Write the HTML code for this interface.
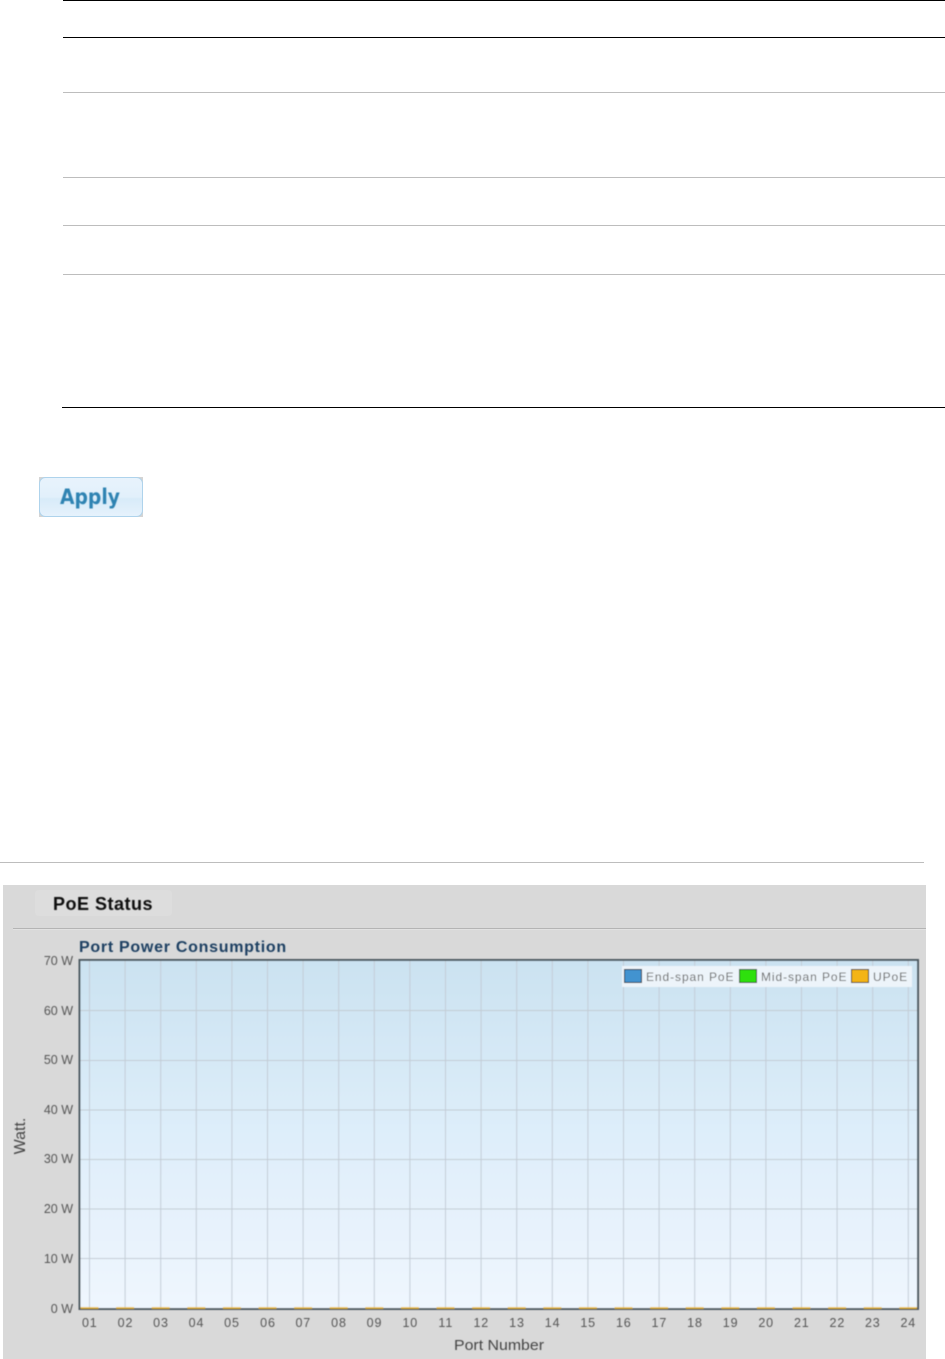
<!DOCTYPE html>
<html>
<head>
<meta charset="utf-8">
<title>PoE Status</title>
<style>
html,body{margin:0;padding:0;background:#fff;width:945px;height:1359px;overflow:hidden}
svg{display:block}
text{font-family:"Liberation Sans",Arial,sans-serif}
</style>
</head>
<body>
<svg width="945" height="1359" viewBox="0 0 945 1359" xmlns="http://www.w3.org/2000/svg">
<defs>
<linearGradient id="plot" x1="0" y1="0" x2="0" y2="1">
<stop offset="0" stop-color="#cbe2f1"/>
<stop offset="0.5" stop-color="#deeefa"/>
<stop offset="1" stop-color="#eff6fe"/>
</linearGradient>
<linearGradient id="btn" x1="0" y1="0" x2="0" y2="1">
<stop offset="0" stop-color="#e8f3fc"/>
<stop offset="0.5" stop-color="#e2f0fb"/>
<stop offset="0.55" stop-color="#d8ebf9"/>
<stop offset="1" stop-color="#e6f2fc"/>
</linearGradient>
<filter id="soft" x="-5%" y="-5%" width="110%" height="110%"><feGaussianBlur stdDeviation="0.4"/></filter>
</defs>

<rect width="945" height="1359" fill="#fff"/>

<!-- table rules -->
<rect x="63" y="0" width="882" height="1" fill="#000"/>
<rect x="63" y="37" width="882" height="1" fill="#000"/>
<rect x="63" y="92" width="882" height="1" fill="#bdbdbd"/>
<rect x="63" y="177" width="882" height="1" fill="#bdbdbd"/>
<rect x="63" y="225" width="882" height="1" fill="#bdbdbd"/>
<rect x="63" y="274" width="882" height="1" fill="#bdbdbd"/>
<rect x="62" y="407" width="883" height="1" fill="#000"/>

<!-- Apply button -->
<rect x="39" y="477" width="104" height="40" fill="#d4d4d4"/>
<rect x="39.5" y="477.5" width="103" height="39" rx="6" fill="url(#btn)" stroke="#aed3ec"/>
<g filter="url(#soft)">
<text x="90" y="504" text-anchor="middle" font-size="21" font-weight="bold" fill="#2f83b2" style="font-family:'DejaVu Sans',sans-serif" textLength="60" lengthAdjust="spacingAndGlyphs">Apply</text>
</g>

<!-- separator -->
<rect x="0" y="862" width="924" height="1" fill="#bdbdbd"/>

<!-- panel -->
<rect x="3" y="885" width="923" height="474" fill="#d9d9d9"/>
<rect x="35" y="890" width="137" height="26" rx="4" fill="#dddddd"/>
<rect x="13" y="928" width="913" height="1" fill="#b4b4b4"/>
<rect x="13" y="929" width="913" height="1" fill="#e2e2e2"/>

<g filter="url(#soft)">
<text x="53" y="910" font-size="18" font-weight="bold" fill="#0c0c0c" letter-spacing="0.5">PoE Status</text>
<text x="79" y="952" font-size="16" font-weight="bold" fill="#1f3f62" letter-spacing="0.72">Port Power Consumption</text>

<!-- plot -->
<rect x="79" y="960" width="839" height="349" fill="url(#plot)"/>
<path d="M80 1010.5H917M80 1060.5H917M80 1110H917M80 1159.5H917M80 1209H917M80 1258.5H917" stroke="#c3ccd3" stroke-width="1" fill="none"/>
<path d="M89.5 961V1308M125.1 961V1308M160.7 961V1308M196.3 961V1308M231.9 961V1308M267.5 961V1308M303.1 961V1308M338.7 961V1308M374.3 961V1308M409.9 961V1308M445.5 961V1308M481.1 961V1308M516.7 961V1308M552.3 961V1308M587.9 961V1308M623.5 961V1308M659.1 961V1308M694.7 961V1308M730.3 961V1308M765.9 961V1308M801.5 961V1308M837.1 961V1308M872.7 961V1308M908.3 961V1308" stroke="#c3ccd6" stroke-width="1" fill="none"/>
<rect x="79.5" y="960" width="838.5" height="349" fill="none" stroke="#4d5a62" stroke-width="2"/>
<line x1="80.5" y1="1308" x2="917" y2="1308" stroke="#e8b31e" stroke-width="1.6" stroke-dasharray="18 17.6"/>

<!-- legend -->
<rect x="622" y="966" width="290" height="21" fill="#edf4fa"/>
<rect x="624.5" y="969.5" width="17" height="13" fill="#4393d0" stroke="#222"/>
<rect x="739.5" y="969.5" width="17" height="13" fill="#2ee00c" stroke="#222"/>
<rect x="851.5" y="969.5" width="17" height="13" fill="#f4b414" stroke="#222"/>
<g font-size="12" fill="#666" letter-spacing="0.92">
<text x="646" y="981">End-span PoE</text>
<text x="761" y="981">Mid-span PoE</text>
<text x="873" y="981">UPoE</text>
</g>

<!-- y axis -->
<g font-size="12.5" fill="#555" text-anchor="end">
<text x="73" y="965">70 W</text>
<text x="73" y="1015">60 W</text>
<text x="73" y="1064">50 W</text>
<text x="73" y="1114">40 W</text>
<text x="73" y="1163">30 W</text>
<text x="73" y="1213">20 W</text>
<text x="73" y="1263">10 W</text>
<text x="73" y="1313">0 W</text>
</g>
<text transform="translate(25,1136) rotate(-90)" font-size="16" fill="#444" text-anchor="middle">Watt.</text>

<!-- x axis -->
<g font-size="12.5" fill="#555" text-anchor="middle" letter-spacing="0.9">
<text x="89.8" y="1327">01</text>
<text x="125.5" y="1327">02</text>
<text x="161" y="1327">03</text>
<text x="196.5" y="1327">04</text>
<text x="232" y="1327">05</text>
<text x="268" y="1327">06</text>
<text x="303.3" y="1327">07</text>
<text x="339" y="1327">08</text>
<text x="374.5" y="1327">09</text>
<text x="410.3" y="1327">10</text>
<text x="445.8" y="1327">11</text>
<text x="481.3" y="1327">12</text>
<text x="517" y="1327">13</text>
<text x="552.6" y="1327">14</text>
<text x="588.2" y="1327">15</text>
<text x="623.8" y="1327">16</text>
<text x="659.4" y="1327">17</text>
<text x="695" y="1327">18</text>
<text x="730.6" y="1327">19</text>
<text x="766.2" y="1327">20</text>
<text x="801.8" y="1327">21</text>
<text x="837.4" y="1327">22</text>
<text x="872.8" y="1327">23</text>
<text x="908.3" y="1327">24</text>
</g>
<text x="499" y="1350" font-size="15" fill="#444" text-anchor="middle" textLength="90" lengthAdjust="spacingAndGlyphs">Port Number</text>
</g>
</svg>
</body>
</html>
